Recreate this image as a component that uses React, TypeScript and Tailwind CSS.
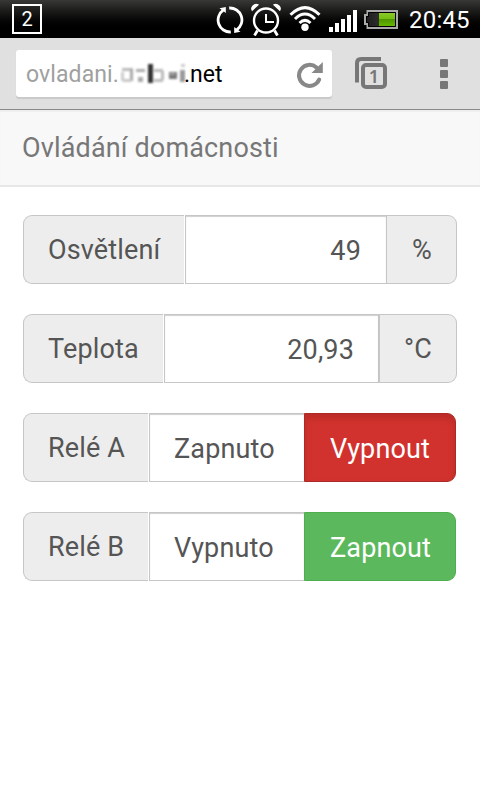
import type { ReactNode } from 'react';

function SyncIcon() {
  return (
    <svg width="28" height="30" viewBox="0 0 28 30" fill="none" stroke="#fff" strokeWidth="2.800">
      <path d="M14.800 27A12 12 0 0 1 7.200 5.200" />
      <path d="M13.200 3A12 12 0 0 1 20.800 24.800" />
      <path d="M3.500 3.200L9.800 2V8Z" fill="#fff" stroke="none" />
      <path d="M24.500 26.800L18.200 28V22Z" fill="#fff" stroke="none" />
    </svg>
  );
}

function AlarmIcon() {
  return (
    <svg width="30" height="34" viewBox="0 0 30 34" fill="none" stroke="#fff">
      <circle cx="15" cy="18.500" r="12" strokeWidth="2.400" />
      <path d="M15 12V20H23" strokeWidth="2" />
      <path d="M6.500 28.500L3.500 33.500M23.500 28.500L26.500 33.500" strokeWidth="2.800" />
      <path d="M1.200 8.200Q0 6 2 4Q4.500 1.500 7 2.800Z" fill="#fff" strokeWidth="1.200" />
      <path d="M28.800 8.200Q30 6 28 4Q25.500 1.500 23 2.800Z" fill="#fff" strokeWidth="1.200" />
    </svg>
  );
}

function WifiIcon() {
  return (
    <svg width="32" height="28" viewBox="0 0 32 28" fill="none" stroke="#fff" strokeWidth="3">
      <path d="M1.500 10.800Q16 -3.600 30.500 10.800" />
      <path d="M6 15Q16 5 26 15" />
      <path d="M10.500 19Q16 13.800 21.500 19" />
      <circle cx="16" cy="23.300" r="3.700" fill="#fff" stroke="none" />
    </svg>
  );
}

function BatteryIcon() {
  return (
    <svg width="34" height="19" viewBox="0 0 34 19">
      <defs>
        <linearGradient id="charge" x1="0" y1="0" x2="0" y2="1">
          <stop offset="0" stopColor="#8bc92c" />
          <stop offset=".46" stopColor="#75bd0d" />
          <stop offset=".5" stopColor="#4f9600" />
          <stop offset="1" stopColor="#66b800" />
        </linearGradient>
        <linearGradient id="cell" x1="0" y1="0" x2="1" y2="0">
          <stop offset="0" stopColor="#1c1c1c" />
          <stop offset="1" stopColor="#444" />
        </linearGradient>
      </defs>
      <path d="M3.500 1H33V18H3.500V14H1V5H3.500Z" fill="url(#cell)" stroke="#aaa" strokeWidth="2" />
      <path d="M4.500 2.500H31.500V16.500H4.500V12.500H2.500V6.500H4.500Z" fill="none" stroke="#000" />
      <rect x="15" y="3" width="16" height="13" fill="url(#charge)" />
    </svg>
  );
}

function StatusBar() {
  return (
    <div className="flex h-[38px] bg-gradient-to-b from-[#383836] to-black to-85% text-white">
      <div className="ml-3 mt-1 flex h-[30px] w-[30px] items-center justify-center border-2 border-white text-[20px] leading-none">
        2
      </div>
      <div className="ml-[174px] mt-[5px]"><SyncIcon /></div>
      <div className="ml-[7px] mt-[2px]"><AlarmIcon /></div>
      <div className="ml-[8px] mt-[4px]"><WifiIcon /></div>
      <div className="ml-[8px] mt-[10px] flex h-[22px] items-end gap-[2px]">
        <div className="h-[5px] w-1 bg-white" />
        <div className="h-[9px] w-1 bg-white" />
        <div className="h-[13px] w-1 bg-white" />
        <div className="h-[17px] w-1 bg-white" />
        <div className="h-[22px] w-1 bg-white" />
      </div>
      <div className="ml-[7px] mt-[10px]"><BatteryIcon /></div>
      <div className="ml-[11px] mt-[4px] text-[24px] leading-[32px] tracking-[0.2px]">20:45</div>
    </div>
  );
}

function CensoredName() {
  return (
    <svg width="66" height="28" viewBox="0 0 66 28">
      <g className="blur-[1px]">
        <path d="M2 8h11v3H2z" fill="#bbb" />
        <path d="M1 12h3v9H1z" fill="#ccc" />
        <path d="M10 9h3v12h-3z" fill="#aaa" />
        <path d="M3 19h8v3H3z" fill="#c8c8c8" />
        <path d="M16 9h9v3h-9z" fill="#aaa" />
        <path d="M18 17h5v5h-5z" fill="#aaa" />
        <path d="M28 4h5v19h-5z" fill="#333" />
        <path d="M34 9h9v3h-9zM34 19h9v3h-9zM41 11h3v9h-3z" fill="#bbb" />
        <path d="M49 12h8v7h-8z" fill="#777" />
        <path d="M50 13h5v2h-5z" fill="#aaa" />
        <path d="M61 4h4v3h-4z" fill="#ccc" />
        <path d="M60 10h5v12h-5z" fill="#999" />
      </g>
    </svg>
  );
}

function BrowserBar() {
  return (
    <div className="flex h-[72px] border-b border-[#898989] bg-[#e0e0e0] text-[#777]">
      <div className="ml-4 mt-3 flex h-[47px] w-[316px] items-center rounded-[3px] bg-white pl-[10px] shadow-[0_2px_1px_#c9c9c9]">
        <span className="w-[94px] pt-[3px] text-[23px] tracking-[0.1px] text-[#a0a0a0]">ovladani.</span>
        <CensoredName />
        <span className="-ml-[2px] w-[41px] pt-[3px] text-[23px] text-black">.net</span>
        <svg className="ml-[71px] mt-[2px]" width="28" height="28" viewBox="0 0 28 28" fill="none">
          <path d="M23.200 18.500A10.500 10.500 0 1 1 20.500 6.500" stroke="#888" strokeWidth="4" strokeLinecap="round" />
          <path d="M26.800 1V12H15.500Z" fill="#888" />
        </svg>
      </div>
      <div className="ml-[23px] mt-[19px] h-[33px] w-[32px]">
        <svg width="32" height="32" viewBox="0 0 32 32" fill="none" stroke="#777" strokeWidth="4">
          <path d="M26 2H6Q2 2 2 6V25.500" />
          <rect x="8" y="8" width="22" height="22" rx="3" />
          <text x="19" y="25.500" textAnchor="middle" fontSize="18" fontWeight="600" fill="#777" stroke="none" fontFamily="'Noto Sans', sans-serif">1</text>
        </svg>
      </div>
      <div className="ml-[53px] mt-[21px] flex flex-col gap-[3px]">
        <div className="h-2 w-2 rounded-[1px] bg-[#777]" />
        <div className="h-2 w-2 rounded-[1px] bg-[#777]" />
        <div className="h-2 w-2 rounded-[1px] bg-[#777]" />
      </div>
    </div>
  );
}

function Row({ children }: { children: ReactNode }) {
  return <div className="flex h-[69px] text-[27px] leading-[67px] tracking-[0.15px] text-[#555]">{children}</div>;
}

function Label({ className, children }: { className: string; children: ReactNode }) {
  return (
    <div className={`mr-px shrink-0 rounded-l-[9px] border border-r-0 border-[#c6c6c6] bg-[#ededed] pl-6 pt-px ${className}`}>
      {children}
    </div>
  );
}

const field = 'shrink-0 border border-[#c6c6c6] bg-white pt-[2px] shadow-[inset_0_1px_1px_#d0d0d0]';
const unit = 'shrink-0 rounded-r-[9px] border border-l-0 border-[#c6c6c6] bg-[#ededed] pt-px';
const button = 'w-[152px] shrink-0 rounded-r-[9px] border pl-[25px] pt-[2px] text-white';

export default function App() {
  return (
    <div className="h-[800px] w-[480px] overflow-hidden whitespace-nowrap bg-white font-['Roboto',sans-serif]">
      <StatusBar />
      <BrowserBar />
      <header className="h-[77px] border-b-2 border-[#e7e7e7] bg-[#f8f8f8] pl-[22px] pt-px text-[27px] leading-[75px] tracking-[0.15px] text-[#777] shadow-[inset_0_2px_1px_#eee]">
        Ovládání domácnosti
      </header>
      <main className="ml-[23px] mt-[28px] flex flex-col gap-[30px]">
        <Row>
          <Label className="w-[161px]">Osvětlení</Label>
          <div className={`${field} w-[202px] pr-[25px] text-right`}>49</div>
          <div className={`${unit} w-[70px] pl-[25px]`}>%</div>
        </Row>
        <Row>
          <Label className="w-[140px]">Teplota</Label>
          <div className={`${field} w-[216px] border-r-2 pr-[24px] text-right`}>20,93</div>
          <div className={`${unit} w-[77px] pl-[24px]`}>°C</div>
        </Row>
        <Row>
          <Label className="w-[125px]">Relé A</Label>
          <div className={`${field} w-[155px] border-r-0 pl-[24px]`}>Zapnuto</div>
          <div className={`${button} border-[#ac2925] bg-[#d2322d] shadow-[inset_0_4px_7px_rgba(0,0,0,0.125)]`}>Vypnout</div>
        </Row>
        <Row>
          <Label className="w-[125px]">Relé B</Label>
          <div className={`${field} w-[155px] border-r-0 pl-[24px]`}>Vypnuto</div>
          <div className={`${button} border-[#4cae4c] bg-[#5cb85c]`}>Zapnout</div>
        </Row>
      </main>
    </div>
  );
}
